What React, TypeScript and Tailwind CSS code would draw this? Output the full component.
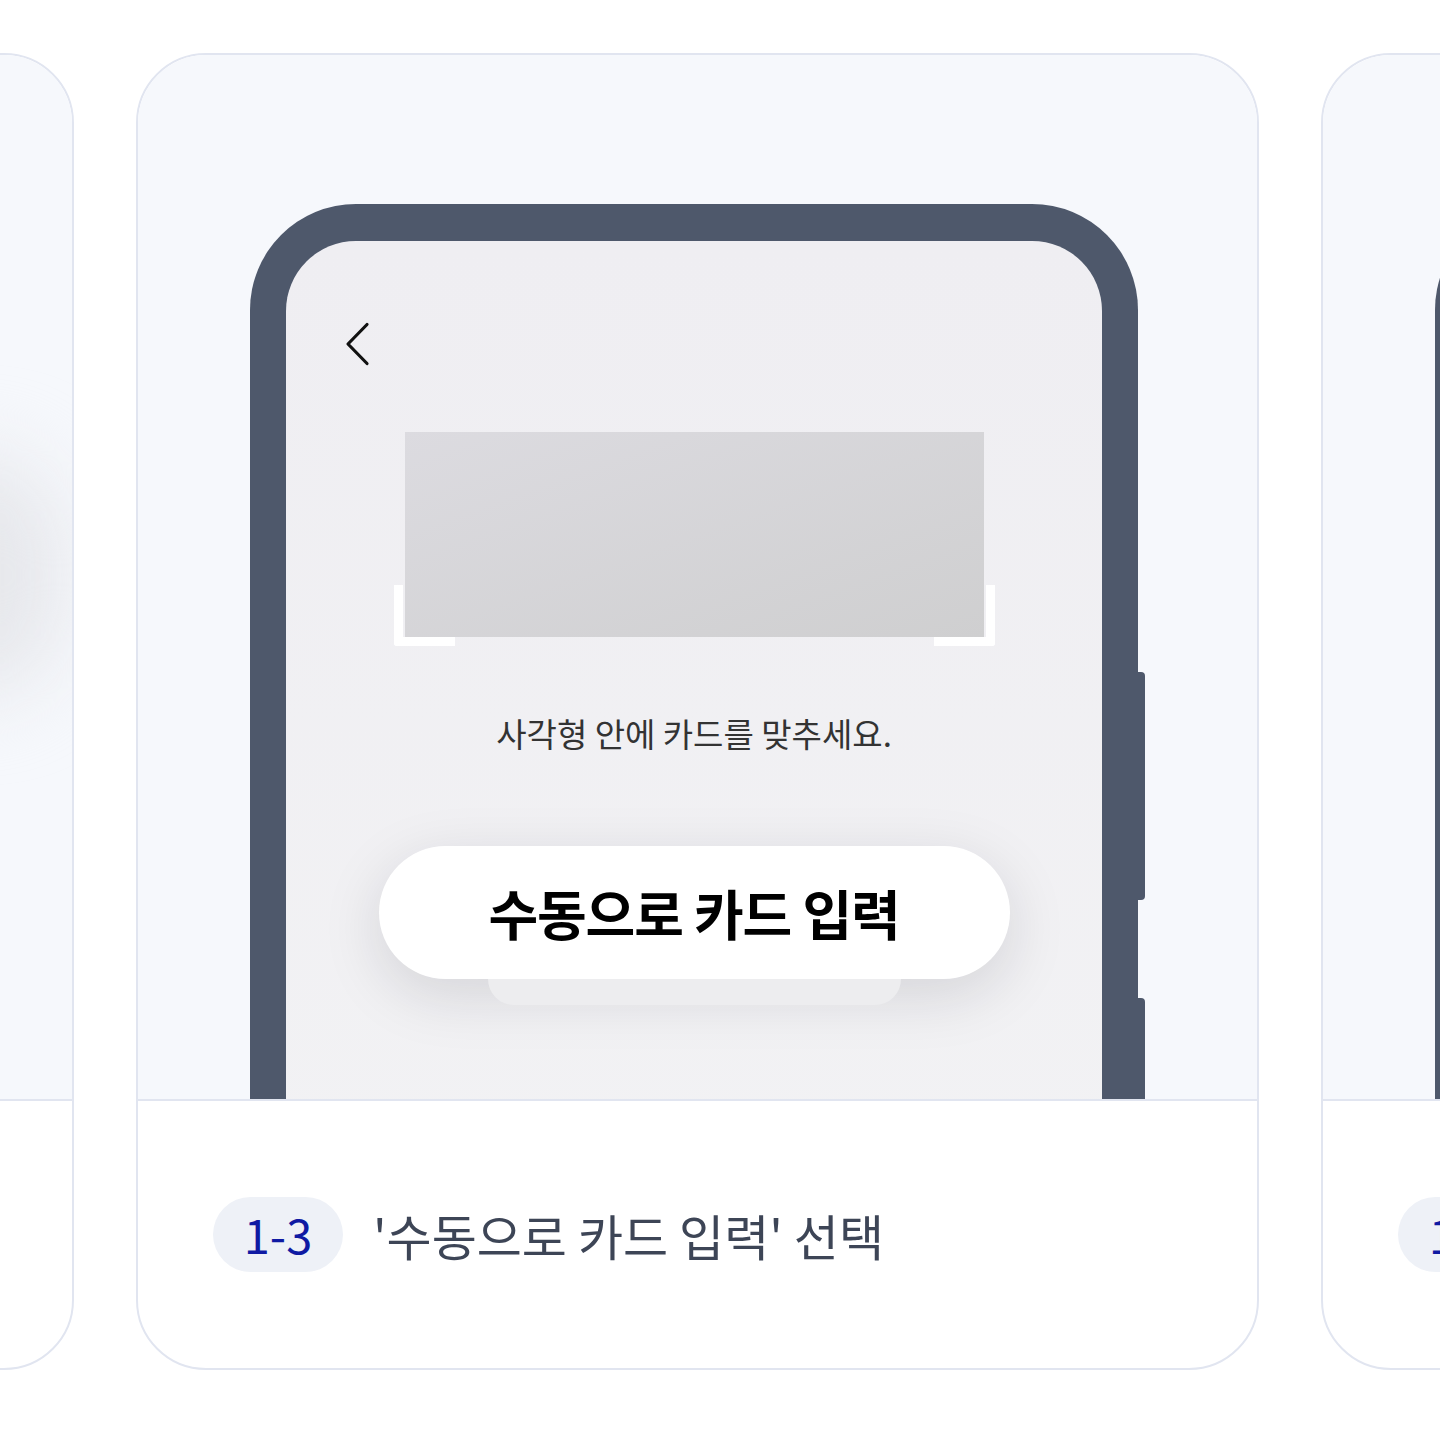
const font = { fontFamily: '"Noto Sans CJK KR", "Noto Sans", sans-serif' };

interface PhoneProps {
  [key: string]: any;
}

const Phone = ({}: PhoneProps) => {
  return (
    <div className="relative h-[1000px] w-[888px] rounded-t-[106px] bg-[#4e586b] px-[36px] pt-[37px]">
      {/* side buttons */}
      <div className="absolute right-[-7px] top-[468px] h-[228px] w-[8px] rounded-r-[4px] bg-[#4e586b]"></div>
      <div className="absolute right-[-7px] top-[794px] h-[220px] w-[8px] rounded-r-[4px] bg-[#4e586b]"></div>

      <div className="flex h-full flex-col items-center rounded-t-[70px] bg-gradient-to-b from-[#efeef2] to-[#f2f2f4]">
        <svg
          className="ml-[59px] mt-[81px] self-start"
          width="26"
          height="44"
          viewBox="0 0 26 44"
          fill="none"
        >
          <polyline
            points="22,2.5 3,22 22,41.5"
            stroke="#111"
            strokeWidth="3.2"
            strokeLinecap="round"
            strokeLinejoin="round"
          />
        </svg>

        <div className="relative mt-[66px] h-[205px] w-[579px]">
          <div className="h-full w-full bg-gradient-to-br from-[#dcdbe0] to-[#cfcfd0]"></div>
          <div className="absolute bottom-[-9px] left-[-11px] h-[61px] w-[61px] rounded-bl-[3px] border-b-[9px] border-l-[9px] border-white"></div>
          <div className="absolute bottom-[-9px] right-[-11px] h-[61px] w-[61px] rounded-br-[3px] border-b-[9px] border-r-[9px] border-white"></div>
        </div>

        <div className="mt-[74px] text-[33px] leading-[44px] text-[#333]">
          사각형 안에 카드를 맞추세요.
        </div>

        <div className="relative mt-[91px] flex w-[631px] flex-col items-center">
          <div className="relative z-10 flex h-[133px] w-full items-center justify-center rounded-full bg-white shadow-[0_16px_60px_rgba(20,20,40,0.13)]">
            <span className="text-[54px] font-bold tracking-[-0.02em] text-black">
              수동으로 카드 입력
            </span>
          </div>
          <div className="relative z-20 h-[26px] w-[413px] rounded-b-[26px] bg-[#ededef]"></div>
        </div>
      </div>
    </div>
  );
};

interface StepCardProps {
  step: string;
  title: string;
  empty?: boolean;
}

const StepCard = ({ step, title, empty }: StepCardProps) => {
  return (
    <div className="flex h-[1317px] w-[1123px] shrink-0 flex-col overflow-hidden rounded-[70px] border-2 border-[#e1e5f0] bg-white">
      <div className="relative h-[1046px] shrink-0 overflow-hidden border-b-2 border-[#e1e5f0] bg-[#f6f8fc] pl-[112px] pt-[149px]">
        {empty ? (
          <div className="absolute left-[930px] top-[400px] h-[240px] w-[180px] rounded-full bg-[#e6e7eb] blur-[40px]"></div>
        ) : (
          <Phone />
        )}
      </div>
      <div className="flex flex-1 items-center gap-[30px] px-[75px]">
        {!empty && (
          <>
            <div className="flex h-[75px] w-[130px] items-center justify-center rounded-full bg-[#eef1f7] text-[47px] text-[#0f1aa3]">
              {step}
            </div>
            <div className="text-[49px] text-[#3d4556]">{title}</div>
          </>
        )}
      </div>
    </div>
  );
};

export default function App() {
  return (
    <div className="h-[1440px] w-[1440px] overflow-hidden bg-white pt-[53px]" style={font}>
      <div className="ml-[-1049px] flex gap-[62px]">
        <StepCard step="1-2" title="'카드 등록' 선택" empty />
        <StepCard step="1-3" title="'수동으로 카드 입력' 선택" />
        <StepCard step="1-4" title="카드 정보 입력" />
      </div>
    </div>
  );
}
